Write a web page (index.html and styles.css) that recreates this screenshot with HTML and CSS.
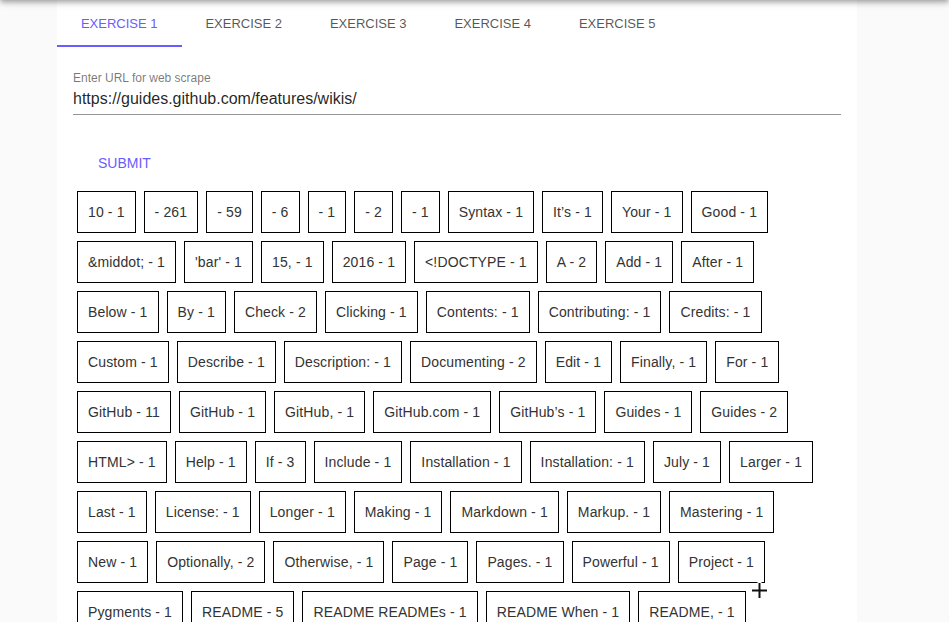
FILE: index.html
```html
<!DOCTYPE html>
<html lang="en">
<head>
<meta charset="utf-8">
<title>Web scrape</title>
<link rel="stylesheet" href="styles.css">
</head>
<body>
<div class="appbar-shadow"></div>
<main class="panel">
  <nav class="tabs">
    <div class="tab active">Exercise 1</div>
    <div class="tab">Exercise 2</div>
    <div class="tab">Exercise 3</div>
    <div class="tab">Exercise 4</div>
    <div class="tab">Exercise 5</div>
  </nav>
  <section class="content">
    <div class="field">
      <label class="field-label">Enter URL for web scrape</label>
      <div class="field-input">https://guides.github.com/features/wikis/</div>
    </div>
    <button class="submit">Submit</button>
    <div class="chips">
      <span class="chip">10 - 1</span>
      <span class="chip">- 261</span>
      <span class="chip">- 59</span>
      <span class="chip">- 6</span>
      <span class="chip">- 1</span>
      <span class="chip">- 2</span>
      <span class="chip">- 1</span>
      <span class="chip">Syntax - 1</span>
      <span class="chip">It’s - 1</span>
      <span class="chip">Your - 1</span>
      <span class="chip">Good - 1</span>
      <span class="chip">&amp;middot; - 1</span>
      <span class="chip">'bar' - 1</span>
      <span class="chip">15, - 1</span>
      <span class="chip">2016 - 1</span>
      <span class="chip">&lt;!DOCTYPE - 1</span>
      <span class="chip">A - 2</span>
      <span class="chip">Add - 1</span>
      <span class="chip">After - 1</span>
      <span class="chip">Below - 1</span>
      <span class="chip">By - 1</span>
      <span class="chip">Check - 2</span>
      <span class="chip">Clicking - 1</span>
      <span class="chip">Contents: - 1</span>
      <span class="chip">Contributing: - 1</span>
      <span class="chip">Credits: - 1</span>
      <span class="chip">Custom - 1</span>
      <span class="chip">Describe - 1</span>
      <span class="chip">Description: - 1</span>
      <span class="chip">Documenting - 2</span>
      <span class="chip">Edit - 1</span>
      <span class="chip">Finally, - 1</span>
      <span class="chip">For - 1</span>
      <span class="chip">GitHub - 11</span>
      <span class="chip">GitHub - 1</span>
      <span class="chip">GitHub, - 1</span>
      <span class="chip">GitHub.com - 1</span>
      <span class="chip">GitHub’s - 1</span>
      <span class="chip">Guides - 1</span>
      <span class="chip">Guides - 2</span>
      <span class="chip">HTML&gt; - 1</span>
      <span class="chip">Help - 1</span>
      <span class="chip">If - 3</span>
      <span class="chip">Include - 1</span>
      <span class="chip">Installation - 1</span>
      <span class="chip">Installation: - 1</span>
      <span class="chip">July - 1</span>
      <span class="chip">Larger - 1</span>
      <span class="chip">Last - 1</span>
      <span class="chip">License: - 1</span>
      <span class="chip">Longer - 1</span>
      <span class="chip">Making - 1</span>
      <span class="chip">Markdown - 1</span>
      <span class="chip">Markup. - 1</span>
      <span class="chip">Mastering - 1</span>
      <span class="chip">New - 1</span>
      <span class="chip">Optionally, - 2</span>
      <span class="chip">Otherwise, - 1</span>
      <span class="chip">Page - 1</span>
      <span class="chip">Pages. - 1</span>
      <span class="chip">Powerful - 1</span>
      <span class="chip">Project - 1</span>
      <span class="chip">Pygments - 1</span>
      <span class="chip">README - 5</span>
      <span class="chip">README READMEs - 1</span>
      <span class="chip">README When - 1</span>
      <span class="chip">README, - 1</span>
    </div>
  </section>
</main>
<svg class="cursor" width="21" height="21" viewBox="0 0 21 21" aria-hidden="true">
  <path d="M11 3 V20 M3 11 H20" stroke="rgba(0,0,0,0.25)" stroke-width="2"/>
  <path d="M10.5 2 V19 M2 10.5 H19" stroke="#fff" stroke-width="4" stroke-linecap="square"/>
  <path d="M10.5 3 V18 M3 10.5 H18" stroke="#111" stroke-width="2"/>
</svg>
</body>
</html>
```

FILE: styles.css
```css
html, body {
  margin: 0;
  padding: 0;
  height: 100%;
  overflow: hidden;
}

body {
  background: #fafafa;
  font-family: "Liberation Sans", Arial, Helvetica, sans-serif;
  color: #333;
}

.appbar-shadow {
  position: fixed;
  top: -64px;
  left: 0;
  right: 0;
  height: 64px;
  background: #fff;
  box-shadow: 0 2px 4px -1px rgba(0,0,0,0.2), 0 4px 5px 0 rgba(0,0,0,0.14), 0 1px 10px 0 rgba(0,0,0,0.12);
  z-index: 5;
}

.panel {
  width: 800px;
  margin-left: 57px;
  min-height: 100%;
  background: #fff;
}

.tabs {
  display: flex;
  height: 47px;
}

.tab {
  width: 124.5px;
  flex: none;
  box-sizing: border-box;
  display: flex;
  align-items: center;
  justify-content: center;
  font-size: 13px;
  text-transform: uppercase;
  color: rgba(0,0,0,0.68);
  border-bottom: 2px solid transparent;
  padding-top: 1px;
}

.tab.active {
  color: #6a5cff;
  border-bottom-color: #6a5cff;
}

.content {
  padding: 0 16px;
}

.field {
  padding-top: 24px;
}

.field-label {
  display: block;
  font-size: 12px;
  line-height: 14px;
  color: rgba(0,0,0,0.54);
}

.field-input {
  font-size: 16px;
  line-height: 19px;
  padding: 4px 0 6px;
  color: rgba(0,0,0,0.87);
  border-bottom: 1px solid rgba(0,0,0,0.42);
}

.submit {
  display: block;
  margin: 32px 0 0 17px;
  padding: 6px 8px;
  border: 0;
  background: transparent;
  font-family: inherit;
  font-size: 14px;
  line-height: 20px;
  text-transform: uppercase;
  color: #6a5cff;
}

.chips {
  display: flex;
  flex-wrap: wrap;
  margin-top: 8px;
  margin-right: 16px;
}

.chip {
  margin: 4px;
  padding: 10px;
  border: 1px solid #000;
  font-size: 14px;
  letter-spacing: 0.13px;
  line-height: 20px;
  color: #333;
  white-space: nowrap;
}

.cursor {
  position: fixed;
  left: 749px;
  top: 580px;
  z-index: 10;
}
```
